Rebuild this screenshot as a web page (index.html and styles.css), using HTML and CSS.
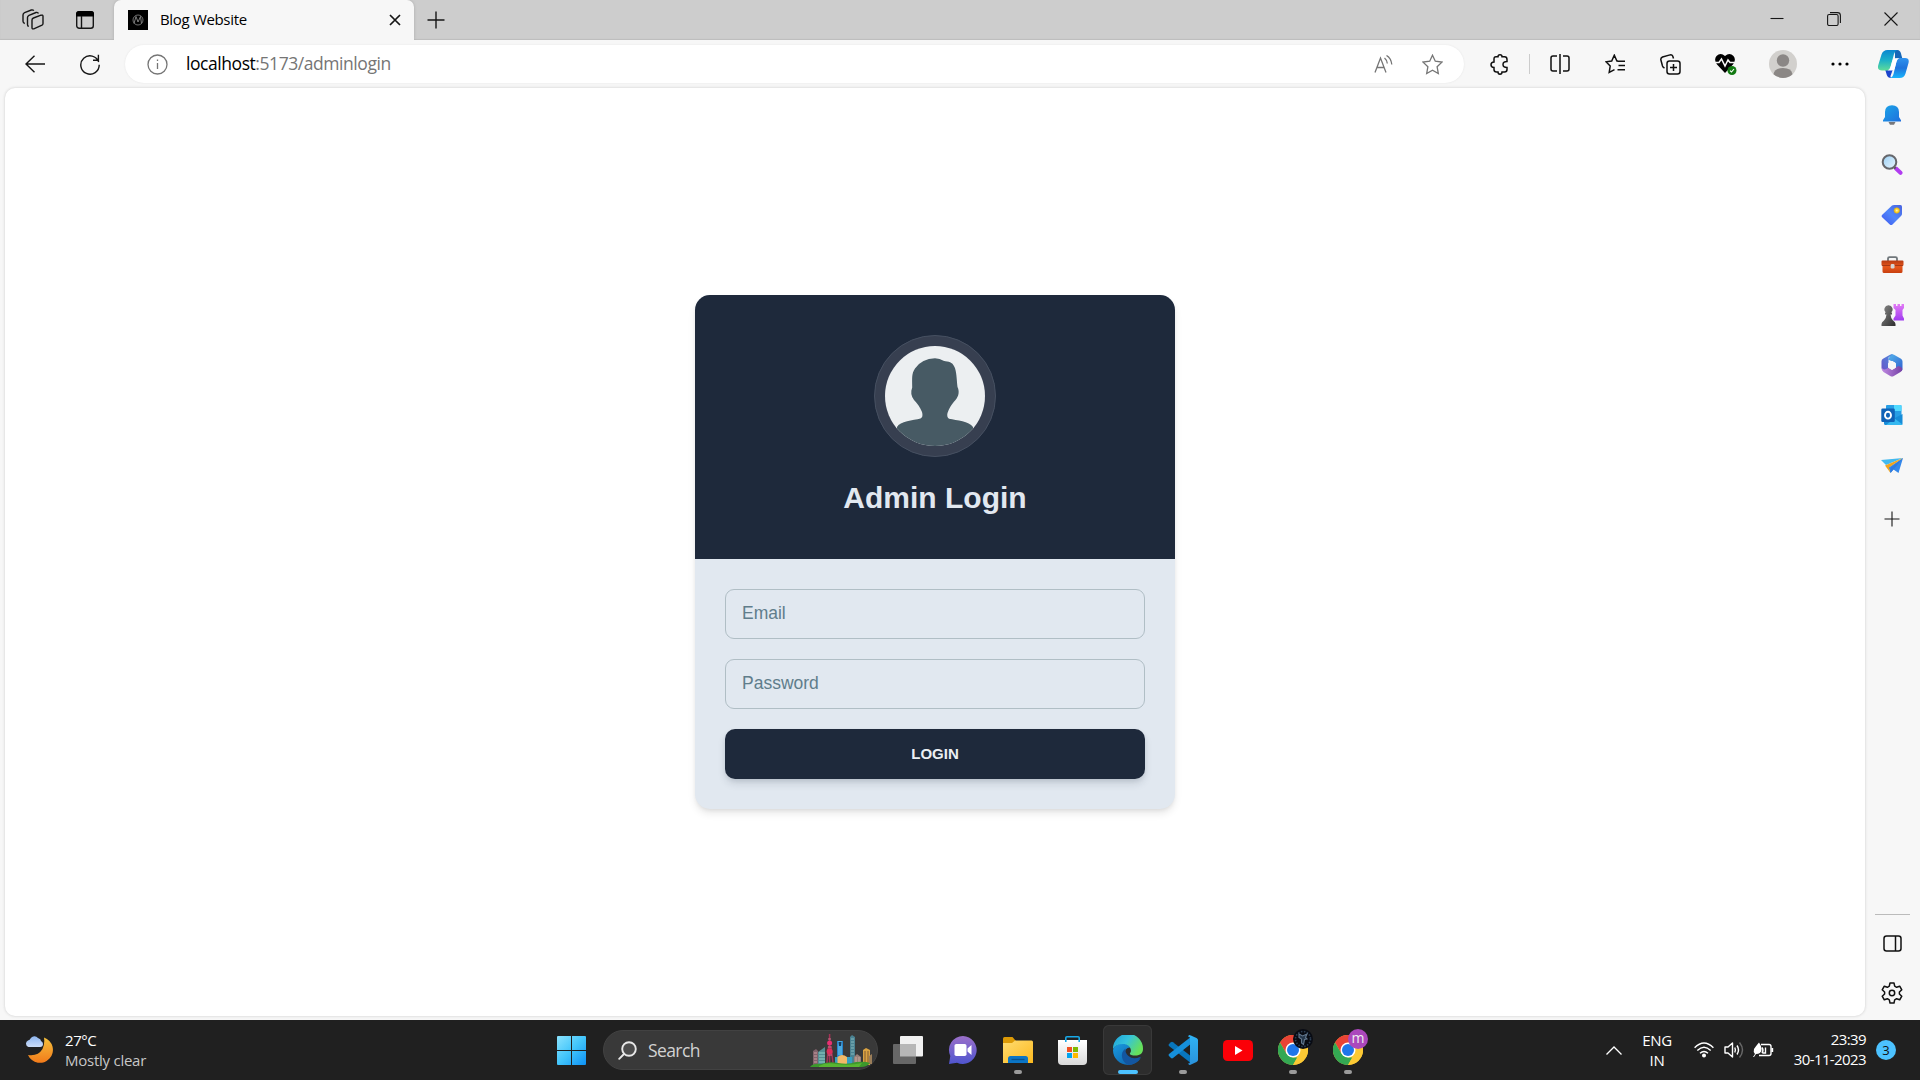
FILE: index.html
```html
<!DOCTYPE html>
<html lang="en">
<head>
<meta charset="utf-8">
<title>Blog Website</title>
<link rel="stylesheet" href="styles.css">
</head>
<body>
<svg class="defs" width="0" height="0" aria-hidden="true">
  <defs>
    <linearGradient id="blue" x1="0" y1="0" x2="1" y2="1"><stop offset="0" stop-color="#1ba5e8"/><stop offset="1" stop-color="#1f6fdd"/></linearGradient>
    <linearGradient id="win" gradientUnits="userSpaceOnUse" x1="0" y1="0" x2="29" y2="29"><stop offset="0" stop-color="#8be3fd"/><stop offset=".5" stop-color="#42c5fb"/><stop offset="1" stop-color="#0d91f5"/></linearGradient>
    <linearGradient id="moon" x1="0" y1="0" x2="0" y2="1"><stop offset="0" stop-color="#f5c13c"/><stop offset="1" stop-color="#f27a1a"/></linearGradient>
    <linearGradient id="cloud" x1="0" y1="0" x2="0" y2="1"><stop offset="0" stop-color="#8db5ef"/><stop offset="1" stop-color="#cbdcf7"/></linearGradient>
    <linearGradient id="purple" x1="0" y1="0" x2="0" y2="1"><stop offset="0" stop-color="#e37bf5"/><stop offset="1" stop-color="#a03cf0"/></linearGradient>
    <linearGradient id="tag" x1="1" y1="0" x2="0" y2="1"><stop offset="0" stop-color="#4a64e0"/><stop offset=".5" stop-color="#4f86fa"/><stop offset="1" stop-color="#3f55ee"/></linearGradient>
    <linearGradient id="box" x1="0" y1="0" x2="0" y2="1"><stop offset="0" stop-color="#b63a12"/><stop offset=".5" stop-color="#e8581c"/><stop offset="1" stop-color="#c8400f"/></linearGradient>
    <linearGradient id="chat" x1="0" y1="0" x2="0" y2="1"><stop offset="0" stop-color="#9b6fc9"/><stop offset="1" stop-color="#4f55cf"/></linearGradient>
    <linearGradient id="folder" x1="0" y1="0" x2="1" y2="1"><stop offset="0" stop-color="#ffdc70"/><stop offset="1" stop-color="#fbb91f"/></linearGradient>
    <linearGradient id="store" x1="0" y1="0" x2="0" y2="1"><stop offset="0" stop-color="#ffffff"/><stop offset="1" stop-color="#d9d9d9"/></linearGradient>
    <linearGradient id="edgeTop" x1="0" y1="0" x2="1" y2=".5"><stop offset="0" stop-color="#1c9fd8"/><stop offset=".5" stop-color="#35c3dd"/><stop offset="1" stop-color="#66e05a"/></linearGradient>
    <linearGradient id="edgeLow" x1="0" y1="0" x2="1" y2="1"><stop offset="0" stop-color="#1a9be0"/><stop offset="1" stop-color="#0c59a4"/></linearGradient>
    <linearGradient id="copA" x1="0" y1="0" x2="0" y2="1"><stop offset="0" stop-color="#0a86d0"/><stop offset=".5" stop-color="#1cb0c8"/><stop offset="1" stop-color="#5fdc9a"/></linearGradient>
    <linearGradient id="copB" x1="0" y1="0" x2="0" y2="1"><stop offset="0" stop-color="#2f93ee"/><stop offset=".5" stop-color="#1f73dc"/><stop offset="1" stop-color="#18b4fb"/></linearGradient>
    <linearGradient id="lens" x1="0" y1="0" x2="1" y2="1"><stop offset="0" stop-color="#9bd0f5"/><stop offset="1" stop-color="#eaf6fe"/></linearGradient>
    <linearGradient id="pawn" x1="0" y1="0" x2="1" y2="1"><stop offset="0" stop-color="#8a8a8a"/><stop offset="1" stop-color="#2d2d2d"/></linearGradient>
    <linearGradient id="code" x1="0" y1="0" x2="0" y2="1"><stop offset="0" stop-color="#2fb4f6"/><stop offset="1" stop-color="#2a92dc"/></linearGradient>
    <linearGradient id="hexA" x1="0" y1="1" x2="1" y2="0"><stop offset="0" stop-color="#6a52c6"/><stop offset="1" stop-color="#4b8fe0"/></linearGradient>
    <linearGradient id="hexB" x1="0" y1="0" x2="1" y2="1"><stop offset="0" stop-color="#55b6ec"/><stop offset="1" stop-color="#2f5fcf"/></linearGradient>
    <linearGradient id="hexC" x1="0" y1="0" x2="1" y2="0"><stop offset="0" stop-color="#c08ae2"/><stop offset="1" stop-color="#7440a5"/></linearGradient>
    <symbol id="chrome" viewBox="0 0 30 30">
      <circle cx="15" cy="15" r="15" fill="#fcc934"/>
      <path d="M2 7.500A15 15 0 0 1 28 7.500H15L8.500 18.750Z" fill="#ea4335"/>
      <path d="M2 7.500L8.500 18.750 15 22.500H19.300L15 30A15 15 0 0 1 2 7.500Z" fill="#34a853"/>
      <path d="M28 7.500A15 15 0 0 1 15 30L21.500 18.750 15 7.500Z" fill="#fcc934"/>
      <circle cx="15" cy="15" r="7.500" fill="#fff"/><circle cx="15" cy="15" r="6" fill="#1f76ea"/>
    </symbol>
  </defs>
</svg>

<div class="screen">
  <header class="tabstrip">
    <span class="cell cell-workspaces"><svg width="22" height="22" viewBox="0 0 22 22" class="line"><path d="M11.500 9L19 6.200Q21 5.700 21 7.200V14.500Q21 15.600 20 16.200L11.800 19.800Q10 20.300 10 18.800V11Q10 9.600 11.500 9"/><path d="M6.800 17.300Q5.500 17.300 5.500 15.500V8.500Q5.500 7 7 6.300L14 3.500Q16 3 16.400 4.500"/><path d="M2.800 14.500Q1 14 1 12.300V6Q1 4.300 2.600 3.600L9.300 1Q11.200.6 11.700 1.800"/></svg></span>
    <span class="cell cell-actions"><svg width="18" height="18" viewBox="0 0 18 18"><rect x=".7" y=".7" width="16.600" height="16.600" rx="2.500" class="line"/><path d="M0 5V3Q0 0 3 0H15Q18 0 18 3V5.500H0Z"/><path d="M5.500 5V17" class="line"/></svg></span>
    <div class="tab">
      <svg width="20" height="20" viewBox="0 0 20 20"><rect width="20" height="20"/><g fill="none" stroke="#8b8b8b"><circle cx="10" cy="10" r="5" stroke-width=".8"/><path d="M6 13.500L8 6.500 10 12 12.500 6.500 13.500 13.500" stroke-width=".9"/></g></svg>
      <span class="tab-title">Blog Website</span>
      <svg width="12" height="12" viewBox="0 0 12 12" class="line tab-close"><path d="M1 1L11 11M11 1L1 11"/></svg>
    </div>
    <span class="cell cell-new"><svg width="18" height="18" viewBox="0 0 18 18" class="line"><path d="M9 .5V17.500M.5 9H17.500"/></svg></span>
    <nav class="window-buttons">
      <span><svg width="14" height="14" viewBox="0 0 14 14" class="line thin"><path d="M.5 6.500H13.500"/></svg></span>
      <span><svg width="14" height="14" viewBox="0 0 14 14" class="line thin"><rect x=".6" y="2.500" width="10.500" height="11" rx="1.500"/><path d="M3 .6H10.500Q13.400.6 13.400 3.500V11"/></svg></span>
      <span><svg width="14" height="14" viewBox="0 0 14 14" class="line thin"><path d="M.5.5L13.500 13.500M13.500.5L.5 13.500"/></svg></span>
    </nav>
  </header>

  <div class="toolbar">
    <span class="cell tool-back"><svg width="20" height="18" viewBox="0 0 20 18" class="line"><path d="M9.500.7L1 9 9.500 17.300M1 9H20"/></svg></span>
    <span class="cell tool-reload"><svg width="20" height="21" viewBox="0 0 20 21" class="line"><path d="M18.700 8A9.200 9.200 0 1 0 19.200 10.800M18.400.8V6.200H13"/></svg></span>
    <div class="omnibox">
      <svg width="21" height="21" viewBox="0 0 21 21" class="line grey"><circle cx="10.500" cy="10.500" r="9.500"/><path d="M10.500 9V15M10.500 5.500V7"/></svg>
      <span class="url"><b>localhost</b>:5173/adminlogin</span>
      <svg width="19" height="18" viewBox="0 0 19 18" class="line grey read"><path d="M1 17.500L6.500 3 12 17.500M3 12.500H10"/><path d="M10.500 3Q13 5 13.300 8.500M12.500 .5Q17 3 17.800 9.500"/></svg>
      <svg width="21" height="21" viewBox="0 0 21 21" class="line grey"><path d="M10.500 1.200L13.300 7.200 19.900 8.100 15.100 12.700 16.300 19.500 10.500 16.200 4.700 19.500 5.900 12.700 1.100 8.100 7.700 7.200Z"/></svg>
    </div>
    <span class="cell tool-puzzle"><svg width="19" height="21" viewBox="0 0 19 21" class="line bold"><path d="M6 2.800H8Q8 .8 10 .8T12 2.800H14.500Q17 2.800 17 5.500V7.500Q13 7.500 13 10.500T17 13.500V15.500Q17 18 14.500 18H12Q12 20.200 10 20.200T8 18H6.500Q4 18 4 15.500V13.500Q1 13.500 1 10.800T4 8V5Q4 2.800 6 2.800"/></svg></span>
    <i class="divider"></i>
    <span class="cell tool-split"><svg width="20" height="20" viewBox="0 0 20 20" class="line bold"><path d="M7 2H3Q1 2 1 4V15Q1 17 3 17H7M13 2H17Q19 2 19 4V15Q19 17 17 17H13M10 0V20"/></svg></span>
    <span class="cell tool-fav"><svg width="21" height="20" viewBox="0 0 21 20" class="line bold"><path d="M13 7H11.900L9.300 1.200 6.700 7 1 7.800 5.200 12 4.200 18.500 9.500 15.700M12.500 7.200H20M13.500 11.500H20M12.500 15.700H20"/></svg></span>
    <span class="cell tool-col"><svg width="21" height="21" viewBox="0 0 21 21" class="line bold"><rect x="7" y="7" width="13" height="13" rx="2.500"/><path d="M13.500 10V17M10 13.500H17M4.500 14Q3 13.300 2.500 12L.9 6Q.4 4 2.500 3L10 .9Q12 .5 12.700 2L13.500 4.500"/></svg></span>
    <span class="cell tool-heart"><svg width="22" height="22" viewBox="0 0 22 22"><path d="M10 20L2 11.500Q-1.500 7 1.500 3Q5.500-1 10 3Q14.500-1 18.500 3Q21.500 7 18 11.500Z"/><path d="M0 9.500H4L6.500 6 10 13 13 7 15 9.500H20" fill="none" stroke="#f7f7f7" stroke-width="1.500"/><circle cx="17" cy="17.500" r="4.500" fill="#137a13"/><path d="M15 17.700L16.500 19 19 16" fill="none" stroke="#fff" stroke-width="1.100"/></svg></span>
    <span class="cell tool-user"><svg width="28" height="28" viewBox="0 0 28 28"><circle cx="14" cy="14" r="14" fill="#d2d0cd"/><circle cx="14" cy="10.500" r="6.200" fill="#8b8785"/><path d="M4.500 24.200Q5.500 18 14 18T23.500 24.200A14 14 0 0 1 4.500 24.200Z" fill="#8b8785"/></svg></span>
    <span class="cell tool-dots"><svg width="18" height="4" viewBox="0 0 18 4"><circle cx="2" cy="2" r="1.600"/><circle cx="9" cy="2" r="1.600"/><circle cx="16" cy="2" r="1.600"/></svg></span>
    <span class="cell tool-copilot"><svg width="31" height="28" viewBox="0 0 31 28"><path d="M7 19H15L12.500 26Q12 28 14 28H13Q9.800 28 8.800 25Z" fill="#1c45cc"/><path d="M17 0H19.500Q22 0 23 3.500L24.300 8.500H17Z" fill="#1667b8"/><path d="M21 8H27Q31.700 8 30.500 13L27.500 23.500Q26.200 28 21.500 28H12Q14.500 27.500 15.500 24L18.500 11.500Q19.300 8 21 8Z" fill="url(#copB)"/><path d="M9.500 0H19.500Q17 .7 16 4L12.500 17Q11.500 20.500 9 20.500H4Q-1.300 20.500.3 15L3.500 4.500Q5 0 9.500 0Z" fill="url(#copA)"/><path d="M18.500 8.300H21.500Q19.500 8.700 18.500 11.500L16.500 19Q15.700 20.500 13.500 20.500H9.500Q11.700 20 12.500 17L14.300 11Q15.200 8.300 18.500 8.300Z" fill="#fff"/></svg></span>
  </div>

  <div class="workspace">
    <main class="page">
      <form class="card">
        <div class="card-head">
          <div class="avatar"><svg width="100" height="100" viewBox="0 0 100 100"><clipPath id="round"><circle cx="50" cy="50" r="50"/></clipPath><circle cx="50" cy="50" r="50" fill="#eceff1"/><path clip-path="url(#round)" d="M50 12.300Q55 12.300 58.500 14.800C64 16 67 15.500 69.500 21C71.500 25 71.700 33 72.500 41C74.500 45 74 50 70.500 54C66 59 64.500 62 62.500 67Q61.500 71 64 72.800C72 74.500 84 75 88 81V100H12V81C15 75 28 74.500 35.500 72.500Q38.500 71 37 66C35 61 32 57 29 54C26 50 25.500 46 27.200 41.500C27.200 31 26.500 28 30 22.500Q37 12.500 50 12.300Z" fill="#475a64"/></svg></div>
          <h1>Admin Login</h1>
        </div>
        <div class="card-body">
          <div class="field">Email</div>
          <div class="field">Password</div>
          <div class="login">LOGIN</div>
        </div>
      </form>
    </main>
    <aside class="sidebar">
      <span><svg width="18" height="21" viewBox="0 0 18 21"><path d="M5.500 17H12.500L11 19.700H7Z" fill="#77777b"/><path d="M9 .3Q15.800.3 16 7V12L18 15.300V16.500H0V15.300L2 12V7Q2.200.3 9 .3Z" fill="url(#blue)"/></svg></span>
      <span><svg width="22" height="22" viewBox="0 0 22 22"><path d="M15 14.500L19.500 18.800" stroke="#b13df0" stroke-width="4" stroke-linecap="round"/><path d="M12 12L14.500 14.500" stroke="#555" stroke-width="2"/><circle cx="8.500" cy="8" r="6.800" fill="url(#lens)" stroke="#66676c" stroke-width="2"/></svg></span>
      <span><svg width="22" height="22" viewBox="0 0 22 22"><path d="M11 1.500Q12 1 13 1H19.500Q21 1 21 2.500V10Q21 11 20 12L11.500 20.500Q10 21.600 8.800 20.500L.9 13Q.2 12 1 11Z" fill="url(#tag)"/><circle cx="15.800" cy="6.500" r="2.700" fill="#ffd52e" stroke="#dda90b" stroke-width=".7"/><circle cx="15.800" cy="6.500" r="1" fill="#fff2aa"/></svg></span>
      <span><svg width="23" height="18" viewBox="0 0 23 18"><path d="M7 6V2.500Q7 1.200 8.500 1.200H14.500Q16 1.200 16 2.500V6" fill="none" stroke="#70777b" stroke-width="1.800"/><path d="M1.500 4.500H21.500Q22.500 4.500 22.500 5.500V9.500H21.500V15.500Q21.500 17 20 17H3Q1.500 17 1.500 15.500V9.500H.5V5.500Q.5 4.500 1.500 4.500Z" fill="url(#box)"/><path d="M1 9.500H22" stroke="#9b3213" stroke-width=".8"/><rect x="9.700" y="8" width="3.800" height="4.500" rx="1.200" fill="#d6d5d3"/></svg></span>
      <span><svg width="23" height="24" viewBox="0 0 23 24"><path d="M12.500 1H15V3H16.500V1H19V3H20.500V1H23V5L21.500 7V12.500L23 15.500V17.500H12.500V15.500L14.500 12.500V7L12.500 5Z" fill="url(#purple)"/><path d="M7.500 2.300A4 4 0 0 1 10 9.500H11V11.500H9.500Q9.700 15 12 17.500Q14.500 19 14.500 21V23H.5V21Q.5 19 3 17.500Q5.300 15 5.500 11.500H4V9.500H5A4 4 0 0 1 7.500 2.300Z" fill="url(#pawn)"/></svg></span>
      <span><svg width="22" height="23" viewBox="0 0 22 23"><path d="M10 .6Q11.500-.2 13 .7L20 4.700Q21.500 5.700 21.500 7.500V14.500Q21.500 16 20.500 17L14.500 13.500V9L7 5.500Z" fill="url(#hexB)"/><path d="M12 .3L7.500 3.500V15L4 17.500 2 16.500Q.5 15.500.5 13.500V7.500Q.5 5.500 2 4.700L9 .8Q10.500-.2 12 .3Z" fill="url(#hexA)"/><path d="M.7 13Q1.200 15.500 3.500 15.500Q5 15.500 7.500 13.500L11 15.500 17.500 12Q21 13 21.400 15Q21.400 17 19.500 18L12.800 22Q11 23 9.200 22L2.500 18Q.3 16.500.7 13Z" fill="url(#hexC)"/><path d="M11 7.300L14.500 9.300V13.500L11 15.500 7.500 13.500V9.300Z" fill="#f7f7f7" stroke="#f7f7f7" stroke-linejoin="round"/></svg></span>
      <span><svg width="22" height="22" viewBox="0 0 22 22"><rect x="5" y="1" width="15.500" height="13" rx="1" fill="#279ee5"/><path d="M13 1H19.500Q20.500 1 20.500 2V7H13Z" fill="#50d9ff"/><path d="M3 11L12 15 21.500 10V20Q21.500 21 20 21H4.500Q3 21 3 19.500Z" fill="#168cd8"/><path d="M13 14L21.500 20.500Q21 21 20 21H5L13 15Z" fill="#35b8f0"/><rect x=".3" y="4.500" width="13.500" height="13.500" rx="1.300" fill="#0f62b7"/><ellipse cx="7" cy="11.200" rx="3" ry="3.400" fill="none" stroke="#fff" stroke-width="1.900"/></svg></span>
      <span><svg width="22" height="17" viewBox="0 0 22 17"><path d="M0 3L22 1 5 8Z" fill="#43b9ee"/><path d="M22 1L17.500 16 12.500 12.500 9.500 16 7.500 10.500Z" fill="#3488ea"/><path d="M22 1L8 10.500 9.500 16 4 8.500Z" fill="#f2a41d"/><path d="M22 1L9.500 11 9.500 16 12.500 12.500Z" fill="#2f7ae0"/></svg></span>
      <span class="side-plus"><svg width="16" height="16" viewBox="0 0 16 16" class="line thin"><path d="M8 .5V15.500M.5 8H15.500"/></svg></span>
      <i class="side-rule"></i>
      <span class="side-panel"><svg width="19" height="17" viewBox="0 0 19 17" class="line bold"><rect x="1" y="1" width="17" height="15" rx="2.500"/><path d="M12.500 1V16"/></svg></span>
      <span class="side-gear"><svg width="22" height="22" viewBox="0 0 22 22" class="line bold"><path d="M9 1H13L13.700 4.200 15.600 5.300 18.700 4.200 20.800 7.800 18.400 10V12L20.800 14.200 18.700 17.800 15.600 16.700 13.700 17.800 13 21H9L8.300 17.800 6.400 16.700 3.300 17.800 1.200 14.200 3.600 12V10L1.200 7.800 3.300 4.200 6.400 5.300 8.300 4.200Z" stroke-linejoin="round"/><circle cx="11" cy="11" r="2.700"/></svg></span>
    </aside>
  </div>

  <footer class="taskbar">
    <div class="weather">
      <svg width="29" height="29" viewBox="0 0 29 29"><path d="M19 2.500A13 13 0 1 1 3 20Q13 21.500 17.500 14Q20 9 19 2.500Z" fill="url(#moon)"/><path d="M3.500 12A3.500 3.500 0 0 1 3 5.500Q5 5 5.500 3.500A4.500 4.500 0 0 1 13 3Q16 4 16 6Q18 7 18 9A3 3 0 0 1 15 12Z" fill="url(#cloud)"/></svg>
      <div class="weather-text"><b>27°C</b><span>Mostly clear</span></div>
    </div>
    <div class="apps">
      <span class="start"><svg width="29" height="29" viewBox="0 0 29 29" fill="url(#win)"><path d="M1 0H14V14H0V1Q0 0 1 0ZM15 0H28Q29 0 29 1V14H15ZM0 15H14V29H1Q0 29 0 28ZM15 15H29V28Q29 29 28 29H15Z"/></svg></span>
      <div class="search">
        <svg width="19" height="19" viewBox="0 0 19 19" fill="#4c4c4c" stroke="#e8e8e8" stroke-width="1.900" stroke-linecap="round"><circle cx="11" cy="8" r="6.800"/><path d="M6 13L1.200 17.800"/></svg>
        <span>Search</span>
        <svg class="skyline" width="63" height="35" viewBox="0 0 63 35">
          <path d="M3 33V18L6 16 8 18V33Z" fill="#81636c"/><path d="M8 33V19L15 14V33Z" fill="#548f94"/><path d="M9 20H15M9 23H15M9 26H15M9 29H15" stroke="#8fd1c7"/><path d="M4 20H7M4 23H7M4 26H7M4 29H7" stroke="#cda0a2"/>
          <path d="M19.600 1V30M17 30L18.500 14H21L23 30" stroke="#a33355" stroke-width="1.500" fill="none"/><path d="M18 6H21M18 14H21.500M18 22H22" stroke="#d96b8c"/><circle cx="19.600" cy="10" r="2.500" fill="#e92f72"/><circle cx="19.600" cy="18.500" r="3" fill="#db305b"/>
          <path d="M27 31V8H33V31Z" fill="#2681cb"/><path d="M28 8H32V22H28Z" fill="#4aa9e0"/><path d="M28.500 9H31.500L31 13H29Z" fill="#173c61"/>
          <path d="M40 31V4L42 2 45 4V31Z" fill="#4a8292"/><path d="M41 6H44M41 9H44M41 12H44M41 15H44M41 18H44M41 21H44" stroke="#86b9bd"/>
          <path d="M25 24H42V32H25Z" fill="#369fc3"/><path d="M27.500 24Q32 20 37 24V31H27.500Z" fill="#f1b968"/><path d="M44 32V24L47 21 51 24V32Z" fill="#9b8079"/><path d="M46 24V31M49 24V31" stroke="#c9ada0"/><path d="M53 32V17L56 15 60 17V32Z" fill="#dba342"/><path d="M55 18V30M58 18V30" stroke="#805b30"/><path d="M59 31V23L62 21V31Z" fill="#9b7e59"/>
          <path d="M0 34Q3 30 11 31Q20 28 28 30Q38 32 46 29Q55 28 60 30Q57 34 51 34Z" fill="#3c982c"/><path d="M9 33Q16 29 26 31Q40 33 52 30L49 34H9Z" fill="#58b531"/>
        </svg>
      </div>
      <span class="app"><svg width="30" height="28" viewBox="0 0 30 28"><rect x="7" width="23" height="20.500" rx="1" fill="#f1f1f1"/><rect y="8" width="23" height="20" rx="1" fill="#676767"/><path d="M7 8H23V20.500H7Z" fill="#b7b7b7"/></svg></span>
      <span class="app"><svg width="29" height="28" viewBox="0 0 29 28"><path d="M15 0A14 14 0 1 1 9 26.800L1 28 2.300 20A14 14 0 0 1 15 0Z" fill="url(#chat)"/><rect x="6.500" y="8" width="12" height="12" rx="1.800" fill="#fff"/><path d="M19.500 12.500L23.500 9V19L19.500 15.500Z" fill="#fff"/></svg></span>
      <span class="app running"><svg width="30" height="27" viewBox="0 0 30 27"><path d="M1.500 0H9.500L12.500 3.500V8H0V1.500Q0 0 1.500 0Z" fill="#dc9a06"/><path d="M0 6H9L12 3.500H28.500Q30 3.500 30 5V26H0Z" fill="url(#folder)"/><path d="M5 26V21.500Q5 19 7.500 19H22.500Q25 19 25 21.500V26Z" fill="#0b75c5"/><path d="M8.500 22.500H21.500" stroke="#07528e" stroke-width="1.300"/></svg></span>
      <span class="app"><svg width="29" height="29" viewBox="0 0 29 29"><path d="M0 4H29V25Q29 29 25 29H4Q0 29 0 25Z" fill="url(#store)"/><path d="M7.800 6V1.800Q7.800.8 9 .8H20Q21.200.8 21.200 1.800V6" fill="none" stroke="#18a9e8" stroke-width="1.600"/><path fill="#f25022" d="M9 11H14V16H9Z"/><path fill="#7fba00" d="M15 11H20V16H15Z"/><path fill="#00a4ef" d="M9 17H14V22H9Z"/><path fill="#ffb900" d="M15 17H20V22H15Z"/></svg></span>
      <span class="app active"><svg width="30" height="30" viewBox="0 0 30 30"><path d="M0 15Q1 10 8 8.500Q15 8 19 13C15 11 11 15 12 19Q13 26 21 26Q25 26 28 23Q23 30 15 30A15 15 0 0 1 0 15Z" fill="url(#edgeLow)"/><path d="M12.500 13.500C6 18 9 27 15 30A15 15 0 0 0 27.500 22.500Q28 21.500 27 22Q20 25 15.500 21Q12 18 12.500 13.500Z" fill="#1356a0"/><path d="M0 14A15 15 0 0 1 30 13.500C30.200 19 26 20.500 22.500 20.500Q17 20.500 16.800 18.500Q17.500 17.500 18 16C18 11.500 14 9 10 9Q3 9 0 14Z" fill="url(#edgeTop)"/></svg></span>
      <span class="app running"><svg width="30" height="30" viewBox="0 0 30 30"><path d="M1 9L3 7.200Q4 6.500 5 7.200L24 22V29L1 11Q0 10 1 9Z" fill="#0876bd"/><path d="M1 21L3 23Q4 23.800 5 23L24 8V1L1 19Q0 20 1 21Z" fill="#168fda"/><path d="M21.500 0Q22 0 28.500 3Q30 4 30 5V25Q30 26 28.500 27L22 30Q21 30 20 28.500Q22 28.500 22 27V3Q22 1.500 20 1.500Q20.500 0 21.500 0Z" fill="url(#code)"/></svg></span>
      <span class="app"><svg width="30" height="21" viewBox="0 0 30 21"><rect width="30" height="21" rx="4.500" fill="#fb0007"/><path d="M12 6L19.500 10.500 12 15Z" fill="#fff"/></svg></span>
      <span class="app running"><svg width="30" height="30"><use href="#chrome"/></svg><i class="profile dark"><svg width="20" height="20" viewBox="0 0 20 20" fill="none" stroke="#62788f"><circle cx="10" cy="10" r="7.500" stroke-dasharray="1.500 1.500" stroke-width="1.600" stroke="#2c3f55"/><path d="M6 5L9.500 7 14 5 12.500 8.500 14 10 11.500 10.500 10.500 15.500 8.500 14 8.500 10 6 8.500Z" stroke-width="1.100" fill="#24364a"/></svg></i></span>
      <span class="app running"><svg width="30" height="30"><use href="#chrome"/></svg><i class="profile">m</i></span>
    </div>
    <div class="tray">
      <svg width="16" height="9" viewBox="0 0 16 9" fill="none" stroke="#fff" stroke-width="1.300"><path d="M.5 8.500L8 1 15.500 8.500"/></svg>
      <div class="lang"><span>ENG</span><span>IN</span></div>
      <svg class="wifi" width="20" height="16" viewBox="0 0 20 16" fill="none" stroke="#fff" stroke-width="1.400"><path d="M.6 5.800Q10-3.800 19.400 5.800M3.300 8.600Q10 2 16.700 8.600M6 11.300Q10 7.500 14 11.300"/><circle cx="10" cy="13.500" r="1.300" fill="#fff"/></svg>
      <svg class="volume" width="20" height="18" viewBox="0 0 20 18" fill="none" stroke="#fff" stroke-width="1.400"><path d="M1 6H4L8.500 2V16L4 12H1Z" stroke-linejoin="round"/><path d="M10.800 6.500Q12 9 10.800 11.500M13 4.500Q16 9 13 13.500"/><path d="M15.500 1.500Q21.500 9 15.500 16.500" stroke="#686868"/></svg>
      <svg class="battery" width="21" height="16" viewBox="0 0 21 16" fill="none" stroke="#fff" stroke-width="1.400"><path d="M8 2.500H16Q18 2.500 18 4.500V11.500Q18 13.500 16 13.500H6M19.500 6V10M9 5.500Q11 8 9 11M12.500 5.500V11H9.500" /><path d="M0 15L2 12Q0 10 1 7Q3 4 6 .5Q9 5 8.500 8Q8 12 3 12L1 15" fill="#fff" stroke="none"/></svg>
      <div class="clock"><span class="time">23:39</span><span>30-11-2023</span></div>
      <i class="badge">3</i>
    </div>
  </footer>
</div>
</body>
</html>
```
FILE: styles.css
```css
* { box-sizing: border-box; }
body { margin: 0; background: #f7f7f7; font-family: "Open Sans", "Noto Sans", sans-serif; color: #000; overflow: hidden; }
svg { display: block; flex: none; }
i { font-style: normal; }
.defs { position: absolute; }
.screen { width: 1920px; height: 1080px; display: flex; flex-direction: column; background: #f7f7f7; }
.line { fill: none; stroke: #161616; stroke-width: 1.4; }
.line.thin { stroke-width: 1.1; }
.line.bold { stroke-width: 1.5; stroke: #111; }
.line.grey { stroke: #757575; stroke-width: 1.3; }
.cell { display: flex; align-items: center; justify-content: center; flex: none; }

.tabstrip { height: 40px; flex: none; display: flex; background: #cdcdcd; box-shadow: inset 0 -1px 1px #bdbdbd; }
.cell-workspaces { width: 65px; }
.cell-actions { width: 40px; }
.tab { width: 300px; margin-left: 9px; padding: 0 13px 0 14px; display: flex; align-items: center; background: #f7f7f7; border-radius: 7px 7px 0 0; box-shadow: 0 0 3px #aaa; clip-path: inset(0 -4px 0 -4px); }
.tab-title { margin: 0 0 2px 12px; font-size: 15px; letter-spacing: -.33px; }
.tab-close { margin-left: auto; stroke-width: 1.7; }
.cell-new { width: 43px; padding-left: 1px; }
.window-buttons { margin-left: auto; padding-right: 1px; display: flex; }
.window-buttons span { width: 57px; height: 38px; display: flex; align-items: center; justify-content: center; }

.toolbar { height: 48px; flex: none; display: flex; align-items: center; padding: 0 6px 0 10px; }
.tool-back { width: 50px; }
.tool-reload { width: 50px; margin-left: 5px; }
.omnibox { width: 1339px; height: 38px; margin-left: 10px; padding: 0 21px 0 22px; display: flex; align-items: center; background: #fff; border-radius: 19px; box-shadow: 0 0 2px #e3e3e3; }
.url { margin: 0 0 2px 18px; font-size: 17.5px; letter-spacing: -.44px; color: #757575; }
.url b { font-weight: 400; color: #000; }
.read { margin: 0 29px 0 auto; }
.tool-puzzle { width: 49px; margin-left: 11px; }
.divider { width: 1px; height: 20px; margin: 0 5px; background: #ccc; }
.tool-split { width: 49px; }
.tool-fav { width: 50px; margin-left: 6px; }
.tool-col { width: 50px; margin-left: 5px; }
.tool-heart { width: 51px; margin-left: 5px; }
.tool-user { width: 50px; margin-left: 7px; }
.tool-dots { width: 49px; margin-left: 7px; }
.tool-copilot { width: 40px; margin-left: 9px; }

.workspace { height: 932px; flex: none; display: flex; }
.page { width: 1860px; height: 928px; margin-left: 5px; display: flex; align-items: center; justify-content: center; background: #fff; border-radius: 10px; box-shadow: 0 0 3px #c9c9c9; }
.card { width: 480px; height: 514px; border-radius: 15px; overflow: hidden; background: #e1e8f0; box-shadow: 0 5px 8px -1px #0000001a, 0 2px 5px -2px #0000001a; font-family: "Liberation Sans", Arial, sans-serif; }
.card-head { height: 264px; padding-top: 40px; background: #1e293b; display: flex; flex-direction: column; align-items: center; }
.avatar { width: 122px; height: 122px; border: 1px solid #465061; border-radius: 50%; background: #373f50; display: grid; place-items: center; }
h1 { margin: 21px 0 0; font-size: 30px; line-height: 40px; font-weight: 700; color: #e2e8f0; }
.card-body { padding: 30px; display: flex; flex-direction: column; gap: 20px; }
.field { height: 50px; padding: 12px 16px; border: 1px solid #b0bec5; border-radius: 9px; font-size: 17.5px; line-height: 22px; color: #607d8b; }
.login { height: 50px; border-radius: 10px; background: #1e293b; color: #eceff3; font-size: 15px; line-height: 50px; font-weight: 700; text-align: center; box-shadow: 0 5px 8px -1px #1e293b26, 0 2px 5px -1px #1e293b1a; }

.sidebar { width: 54px; padding-top: 2px; display: flex; flex-direction: column; align-items: center; }
.sidebar span { height: 50px; display: flex; align-items: center; }
.side-plus { margin-top: 4px; }
.side-rule { width: 35px; height: 1px; margin-top: 370px; background: #bbb; }
.sidebar .side-panel { margin-top: 3px; }

.taskbar { height: 60px; flex: none; display: flex; background: #202020; color: #fff; font-size: 15px; line-height: 20px; }
.weather { width: 543px; padding: 0 0 2px 25px; display: flex; align-items: center; gap: 11px; }
.weather-text { padding-top: 2px; display: flex; flex-direction: column; letter-spacing: -.45px; }
.weather-text b { font-weight: 400; }
.weather-text span { color: #c7c7c7; letter-spacing: -.25px; }
.apps { display: flex; align-items: center; }
.start { width: 60px; display: flex; justify-content: center; margin-right: 1px; margin-left: -2px; }
.search { width: 275px; height: 40px; margin: 0 5px 0 1px; padding: 0 4px 0 14px; display: flex; align-items: center; background: #393939; border: 1px solid #424242; border-radius: 20px; color: #d2d2d2; font-size: 17.5px; }
.search span { margin-left: 11px; letter-spacing: -.6px; }
.skyline { margin-left: auto; }
.app { position: relative; width: 49px; height: 50px; margin-right: 6px; display: flex; align-items: center; justify-content: center; border-radius: 6px; }
.active { background: #2d2d2d; box-shadow: inset 0 0 0 1px #393939; }
.running::after, .active::after { content: ""; position: absolute; bottom: 1px; width: 8px; height: 4px; border-radius: 2px; background: #9b9b9b; }
.active::after { width: 20px; background: #4cc2ff; }
.profile { position: absolute; top: 4px; right: 4px; width: 20px; height: 20px; border-radius: 50%; background: #ab47bc; color: #eee; font-size: 14px; line-height: 17px; text-align: center; }
.dark { background: #080b13; }
.tray { margin-left: auto; padding-right: 24px; display: flex; align-items: center; }
.lang { width: 40px; margin-left: 15px; display: flex; flex-direction: column; align-items: center; letter-spacing: -.3px; }
.wifi { margin-left: 17px; }
.volume { margin-left: 10px; }
.battery { margin-left: 9px; }
.clock { width: 92px; padding-bottom: 2px; display: flex; flex-direction: column; align-items: flex-end; letter-spacing: -.6px; }
.badge { width: 20px; height: 20px; margin-left: 10px; border-radius: 50%; background: #4cc2ff; color: #111; font-size: 13px; text-align: center; }
```
